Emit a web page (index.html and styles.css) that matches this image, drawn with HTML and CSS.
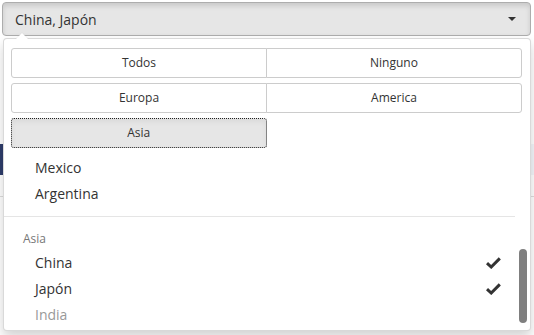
FILE: index.html
```html
<!DOCTYPE html>
<html lang="es">
<head>
    <meta charset="UTF-8">
    <meta name="viewport" content="width=device-width, initial-scale=1.0">
    <title>Selector de paises</title>
    <link rel="stylesheet" href="styles.css">
</head>
<body>
    <div class="select open">
        <button class="select-toggle">
            <span class="select-value">China, Japón</span>
            <span class="caret"></span>
        </button>

        <div class="select-menu">
            <div class="actions">
                <div class="btn-group">
                    <button class="btn">Todos</button>
                    <button class="btn">Ninguno</button>
                </div>
                <div class="btn-group">
                    <button class="btn">Europa</button>
                    <button class="btn">America</button>
                </div>
                <div class="btn-group half">
                    <button class="btn active">Asia</button>
                </div>
            </div>

            <div class="options">
                <ul class="option-list">
                    <li class="opt">Mexico</li>
                    <li class="opt">Argentina</li>
                    <li class="divider"></li>
                    <li class="header">Asia</li>
                    <li class="opt selected">China
                        <svg class="check" width="15" height="12" viewBox="0 0 15 12"><path d="M1 6.2 L5.2 10 L13.8 1.4" fill="none" stroke="#333" stroke-width="3"/></svg>
                    </li>
                    <li class="opt selected">Japón
                        <svg class="check" width="15" height="12" viewBox="0 0 15 12"><path d="M1 6.2 L5.2 10 L13.8 1.4" fill="none" stroke="#333" stroke-width="3"/></svg>
                    </li>
                    <li class="opt disabled">India</li>
                </ul>
                <div class="scroll-track">
                    <div class="scroll-thumb"></div>
                </div>
            </div>
        </div>
    </div>

    <!-- form content behind the open menu -->
    <div class="page">
        <div class="note"></div>
        <hr class="rule">
    </div>
</body>
</html>
```

FILE: styles.css
```css
body {
    margin: 0;
    padding: 2px 3px 0 2px;
    font-family: "Open Sans", "Liberation Sans", sans-serif;
    font-size: 14px;
    color: #333;
    background: #fff;
    overflow: hidden;
    height: 335px;
    box-sizing: border-box;
}

.select {
    position: relative;
}

.select-toggle {
    display: flex;
    align-items: center;
    justify-content: space-between;
    width: 100%;
    height: 34px;
    padding: 6px 12px;
    font-family: inherit;
    font-size: 14px;
    color: #333;
    background: #e6e6e6;
    border: 1px solid #adadad;
    border-radius: 4px;
    box-shadow: inset 0 3px 5px rgba(0,0,0,0.125);
    box-sizing: border-box;
    text-align: left;
}

.caret {
    width: 0;
    height: 0;
    border-top: 4px solid #333;
    border-left: 4px solid transparent;
    border-right: 4px solid transparent;
    margin-right: 2px;
}

.select-menu {
    position: absolute;
    top: 36px;
    left: 1px;
    right: 0;
    z-index: 10;
    background: #fff;
    border: 1px solid rgba(0,0,0,0.15);
    border-radius: 4px;
    box-shadow: 0 6px 12px rgba(0,0,0,0.175);
    padding: 5px 0;
}

.select-menu::before {
    content: "";
    position: absolute;
    top: -7px;
    left: 11px;
    border-left: 7px solid transparent;
    border-right: 7px solid transparent;
    border-bottom: 7px solid rgba(204,204,204,0.2);
}

.select-menu::after {
    content: "";
    position: absolute;
    top: -6px;
    left: 12px;
    border-left: 6px solid transparent;
    border-right: 6px solid transparent;
    border-bottom: 6px solid #fff;
}

.actions {
    display: flex;
    flex-direction: column;
    gap: 5px;
    padding: 4px 8px 4px 7px;
}

.btn-group {
    display: flex;
}

.btn-group.half {
    width: 50%;
}

.btn {
    flex: 1;
    height: 30px;
    padding: 5px 10px;
    font-family: inherit;
    font-size: 12px;
    line-height: 18px;
    color: #333;
    background: #fff;
    border: 1px solid #ccc;
    box-sizing: border-box;
}

.btn:first-child {
    border-radius: 3px 0 0 3px;
}

.btn:last-child {
    border-radius: 0 3px 3px 0;
    margin-left: -1px;
}

.btn:only-child {
    border-radius: 3px;
    margin-left: 0;
}

.btn.active {
    background: #e6e6e6;
    border: 1px dotted #222;
    box-shadow: inset 0 3px 5px rgba(0,0,0,0.05);
}

.options {
    display: flex;
    height: 173px;
    overflow: hidden;
}

.option-list {
    flex: 1;
    list-style: none;
    margin: 3px 0 0 0;
    padding: 0;
}

.option-list li {
    line-height: 20px;
}

.opt {
    display: flex;
    align-items: center;
    justify-content: space-between;
    padding: 3px 14px 3px 31px;
    white-space: nowrap;
}

.opt.disabled {
    color: #999;
}

.check {
    display: block;
}

.divider {
    height: 1px;
    margin: 9px 0;
    background: #e5e5e5;
}

.option-list .header {
    padding: 4px 20px 3px 19px;
    font-size: 12px;
    line-height: 17px;
    color: #777;
}

.scroll-track {
    width: 15px;
}

.scroll-thumb {
    width: 8px;
    height: 74px;
    margin: 97px 0 0 4px;
    background: #7f7f7f;
    border-radius: 4px;
}

.page {
    margin: 108px -3px 0 -2px;
}

.note {
    border-left: 3px solid #2e3d6b;
    height: 31px;
    background: #f4f6fa;
}

.rule {
    border: 0;
    border-top: 1px solid #ddd;
    margin: 21px 0 0 0;
}
```
